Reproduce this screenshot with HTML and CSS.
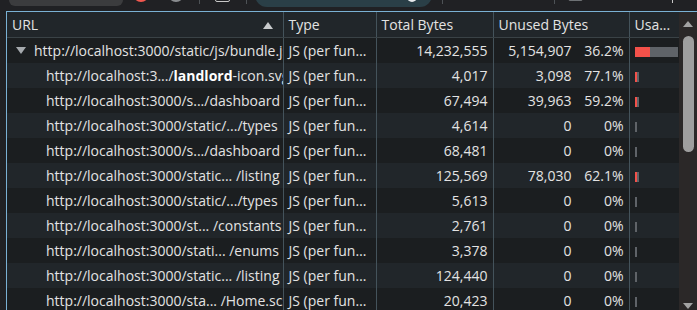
FILE: index.html
```html
<!DOCTYPE html>
<html lang="en">
<head>
    <meta charset="UTF-8">
    <title>Coverage</title>
    <link rel="stylesheet" href="styles.css">
</head>
<body>
    <div class="toolbar">
        <div class="tb-input"></div>
        <div class="tb-record"></div>
        <div class="tb-reload"></div>
        <div class="tb-sep tb-sep-1"></div>
        <div class="tb-box"></div>
        <div class="tb-sep tb-sep-2"></div>
        <div class="tb-pill"><span class="tb-dot"></span></div>
        <div class="tb-sep tb-sep-3"></div>
        <div class="tb-sep tb-sep-4"></div>
        <div class="tb-box tb-box-b"></div>
        <div class="tb-sep tb-sep-5"></div>
    </div>

    <div class="panel">
        <div class="grid-wrap">
            <table class="grid">
                <colgroup>
                    <col class="c-url">
                    <col class="c-type">
                    <col class="c-total">
                    <col class="c-unused">
                    <col class="c-usage">
                </colgroup>
                <thead>
                    <tr>
                        <th class="url-head">URL<span class="sort-up"></span></th>
                        <th>Type</th>
                        <th>Total Bytes</th>
                        <th>Unused Bytes</th>
                        <th>Usa...</th>
                    </tr>
                </thead>
                <tbody id="rows"></tbody>
            </table>
        </div>
        <div class="scrollbar">
            <span class="sb-up"></span>
            <div class="sb-thumb"></div>
            <span class="sb-down"></span>
        </div>
    </div>

    <script>
        const rows = [
            { url: 'http://localhost:3000/static/js/bundle.js', total: '14,232,555', unused: '5,154,907', pct: '36.2%', bar: 43, used: 15, parent: true },
            { url: 'http://localhost:3.../<b>landlord</b>-icon.svg', total: '4,017', unused: '3,098', pct: '77.1%', bar: 4, used: 2 },
            { url: 'http://localhost:3000/s.../dashboard', total: '67,494', unused: '39,963', pct: '59.2%', bar: 4, used: 2 },
            { url: 'http://localhost:3000/static/.../types', total: '4,614', unused: '0', pct: '0%', bar: 2, used: 0 },
            { url: 'http://localhost:3000/s.../dashboard', total: '68,481', unused: '0', pct: '0%', bar: 2, used: 0 },
            { url: 'http://localhost:3000/static... /listing', total: '125,569', unused: '78,030', pct: '62.1%', bar: 4, used: 2 },
            { url: 'http://localhost:3000/static/.../types', total: '5,613', unused: '0', pct: '0%', bar: 2, used: 0 },
            { url: 'http://localhost:3000/st... /constants', total: '2,761', unused: '0', pct: '0%', bar: 2, used: 0 },
            { url: 'http://localhost:3000/stati...  /enums', total: '3,378', unused: '0', pct: '0%', bar: 2, used: 0 },
            { url: 'http://localhost:3000/static... /listing', total: '124,440', unused: '0', pct: '0%', bar: 2, used: 0 },
            { url: 'http://localhost:3000/sta... /Home.scss', total: '20,423', unused: '0', pct: '0%', bar: 2, used: 0 }
        ];

        const body = document.getElementById('rows');
        rows.forEach(r => {
            const tr = document.createElement('tr');
            const arrow = r.parent ? '<span class="expand"></span>' : '';
            tr.innerHTML = `
                <td class="url ${r.parent ? 'parent' : 'child'}">${arrow}${r.url}</td>
                <td class="type">JS (per function)</td>
                <td class="num">${r.total}</td>
                <td class="num"><span class="unused">${r.unused}</span><span class="pct">${r.pct}</span></td>
                <td class="usage"><span class="bar" style="width:${r.bar}px"><span class="bar-used" style="width:${r.used}px"></span></span></td>`;
            body.appendChild(tr);
        });
    </script>
</body>
</html>
```

FILE: styles.css
```css
:root {
    --bg: #202124;
    --row-a: #1b1e20;
    --row-b: #21262a;
    --head: #21262a;
    --line: #44535b;
    --text: #e3e3e3;
    --focus: #7ab1d4;
}

body {
    margin: 0;
    background: var(--bg);
    font-family: 'Open Sans', 'Noto Sans', sans-serif;
    font-size: 14px;
    color: var(--text);
    overflow: hidden;
}

/* top strip, only the bottom of it is visible */
.toolbar {
    position: relative;
    height: 10px;
    overflow: hidden;
}

.toolbar > div {
    position: absolute;
}

.tb-input {
    left: 9px;
    top: -22px;
    width: 114px;
    height: 28px;
    background: #3b3c3e;
    border-radius: 6px;
}

.tb-record,
.tb-reload {
    top: -14px;
    width: 12px;
    height: 12px;
    border: 2px solid #f2584f;
    border-radius: 50%;
}

.tb-record { left: 133px; }

.tb-reload {
    left: 168px;
    border-color: #8a8d90;
}

.tb-sep {
    top: -6px;
    width: 1px;
    height: 10px;
    background: #4d5256;
}

.tb-sep-1 { left: 199px; }
.tb-sep-2 { left: 246px; }
.tb-sep-3 { left: 442px; }
.tb-sep-4 { left: 554px; }
.tb-sep-5 { left: 672px; top: -7px; background: #c8c8c8; }

.tb-box {
    left: 215px;
    top: -8px;
    width: 13px;
    height: 8px;
    border: 1px solid #c8c8c8;
    border-radius: 2px;
}

.tb-box-b {
    left: 568px;
    top: -9px;
    border-color: #6d7174;
}

.tb-pill {
    left: 255px;
    top: -24px;
    width: 177px;
    height: 31px;
    background: #2a3f47;
    border-radius: 12px;
}

.tb-dot {
    position: absolute;
    right: 15px;
    top: 16px;
    width: 10px;
    height: 10px;
    border-radius: 50%;
    background: #e8eaed;
}

.panel {
    display: flex;
    margin: 1px 0 0 6px;
    border-top: 1px solid var(--focus);
    border-left: 1px solid var(--focus);
    height: 320px;
}

.grid-wrap {
    width: 673px;
    overflow: hidden;
}

.grid {
    table-layout: fixed;
    border-collapse: collapse;
    width: 673px;
}

.c-url { width: 276px; }
.c-type { width: 93px; }
.c-total { width: 117px; }
.c-unused { width: 136px; }
.c-usage { width: 51px; }

.grid th,
.grid td {
    padding: 0 5px;
    white-space: nowrap;
    overflow: hidden;
    border-left: 1px solid var(--line);
    height: 25px;
    line-height: 25px;
}

.grid th:first-child,
.grid td:first-child {
    border-left: none;
}

.grid th {
    background: var(--head);
    font-weight: 400;
    text-align: left;
    height: 25px;
    border-bottom: 1px solid #3a4246;
}

.url-head {
    position: relative;
}

.sort-up {
    position: absolute;
    right: 10px;
    top: 10px;
    border-left: 5px solid transparent;
    border-right: 5px solid transparent;
    border-bottom: 7px solid #c8cacc;
}

.grid tbody tr:nth-child(odd) td { background: var(--row-a); }
.grid tbody tr:nth-child(even) td { background: var(--row-b); }

.url.parent {
    padding-left: 9px;
}

.url.child {
    padding-left: 39px;
}

.url b {
    color: #fff;
    font-weight: 700;
}

.expand {
    display: inline-block;
    vertical-align: middle;
    margin: -3px 8px 0 0;
    border-left: 5px solid transparent;
    border-right: 5px solid transparent;
    border-top: 7px solid #a6aaae;
}

.type {
    text-overflow: ellipsis;
}

.num {
    text-align: right;
}

.unused {
    display: inline-block;
}

.pct {
    display: inline-block;
    width: 52px;
}

.usage {
    line-height: 0;
}

.bar {
    display: inline-block;
    height: 10px;
    background: #5f6368;
    vertical-align: middle;
}

.bar-used {
    display: block;
    height: 10px;
    background: #f4514a;
}

.scrollbar {
    position: relative;
    width: 18px;
    background: #2b2828;
}

.sb-up,
.sb-down {
    position: absolute;
    left: 4px;
    border-left: 5px solid transparent;
    border-right: 5px solid transparent;
}

.sb-up {
    top: 9px;
    border-bottom: 6px solid #a3a3a3;
}

.sb-down {
    top: 291px;
    border-top: 6px solid #a3a3a3;
}

.sb-thumb {
    position: absolute;
    left: 4px;
    top: 24px;
    width: 11px;
    height: 116px;
    background: #9f9f9f;
    border-radius: 6px;
}
```
